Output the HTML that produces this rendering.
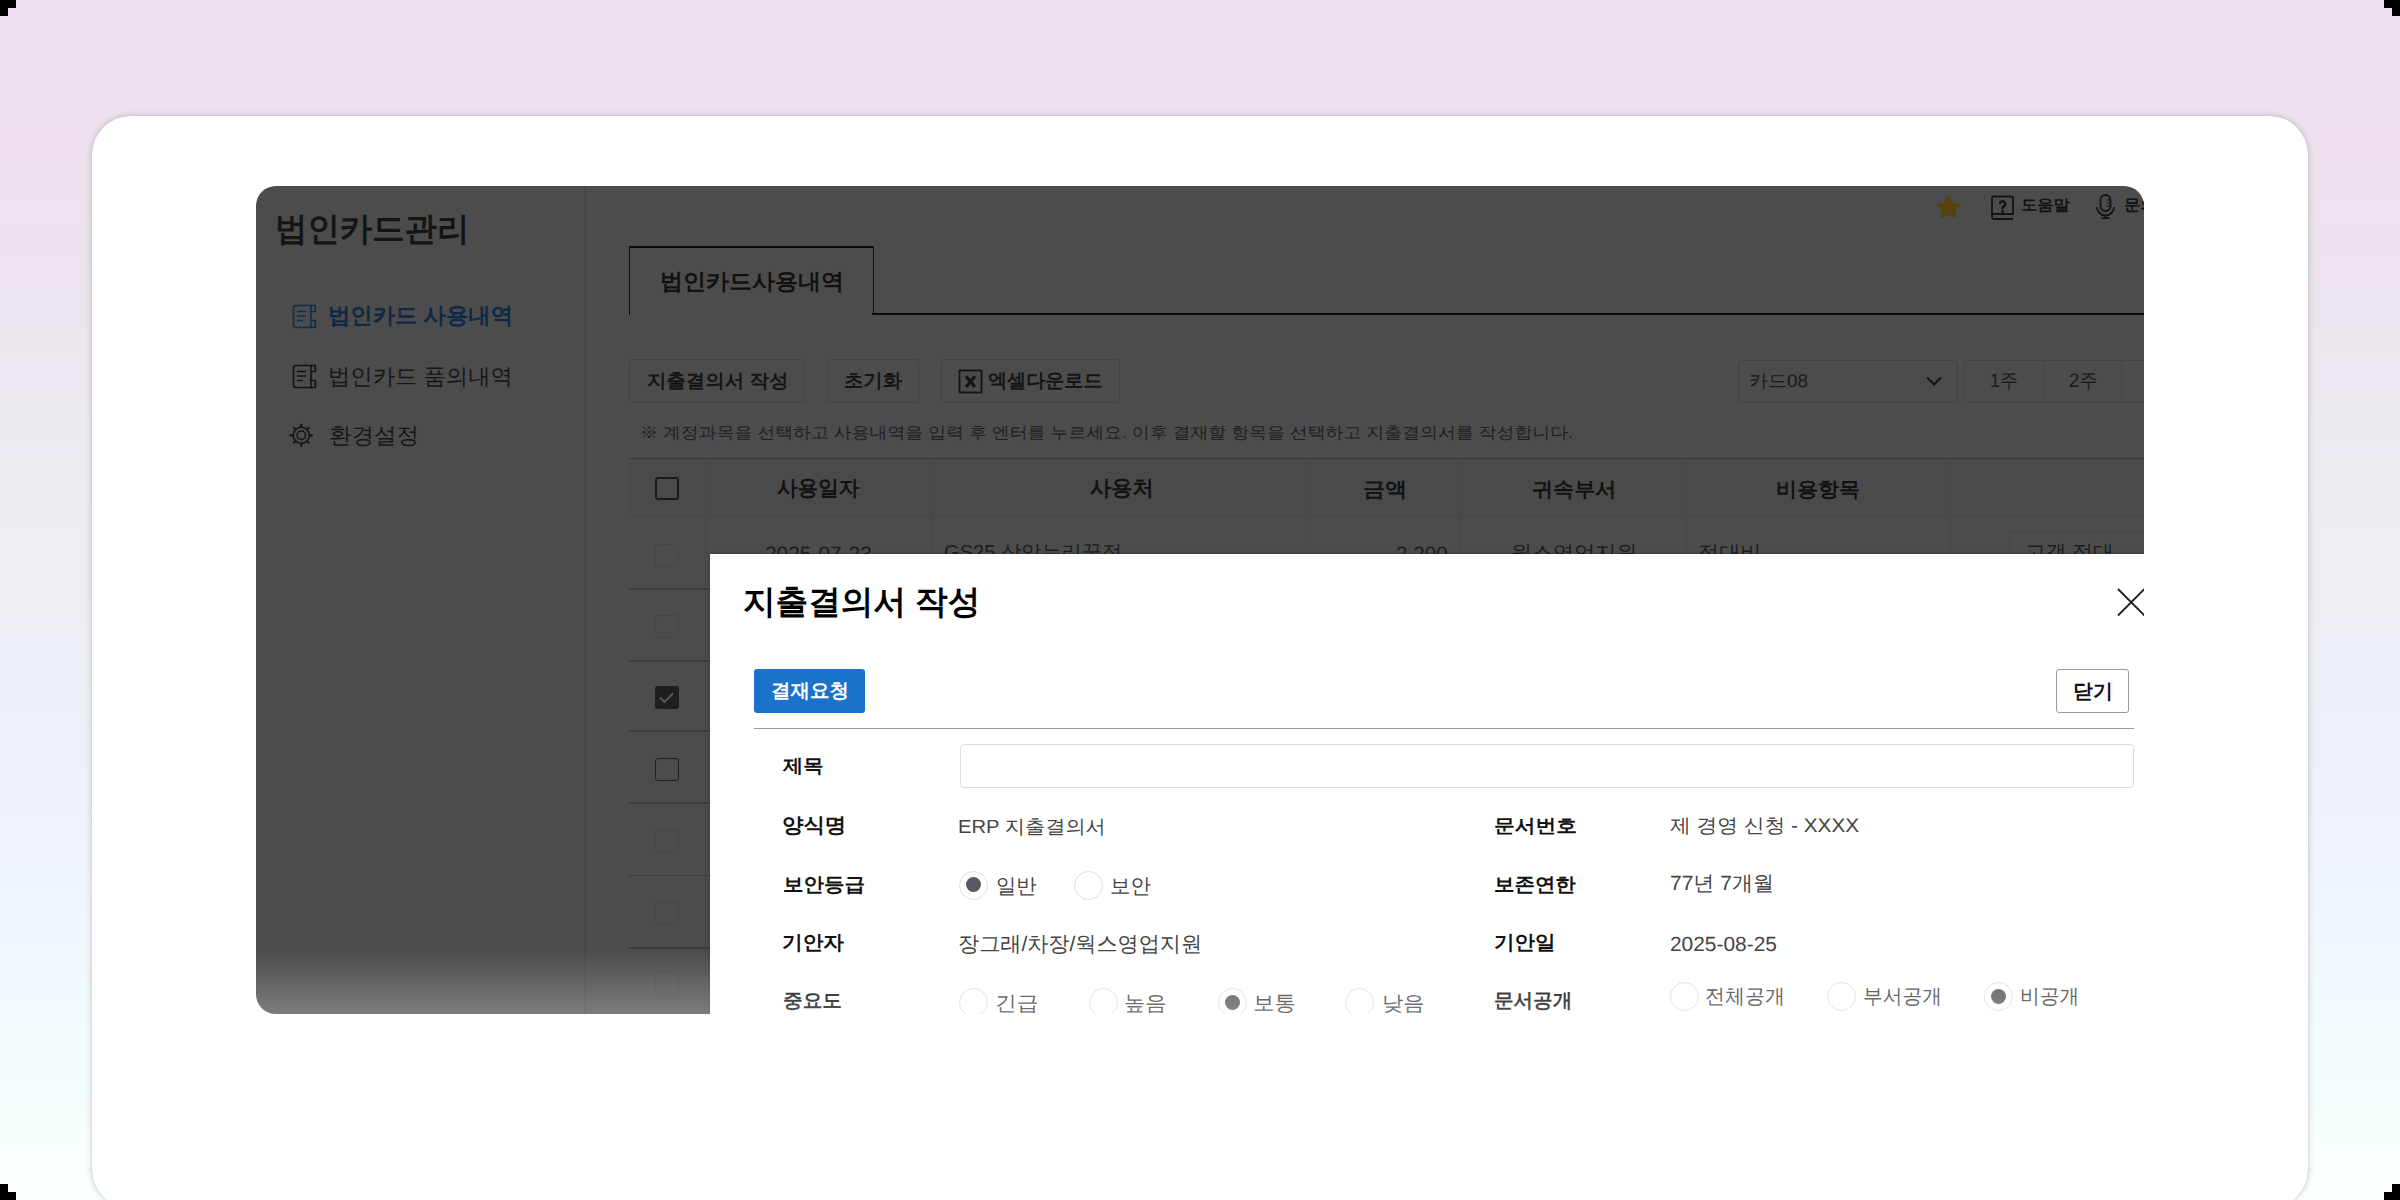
<!DOCTYPE html>
<html><head><meta charset="utf-8">
<style>
html,body{margin:0;padding:0}
body{width:2400px;height:1200px;overflow:hidden;position:relative;font-family:"Liberation Sans",sans-serif;
background:linear-gradient(180deg,#ede1ee 0px,#eee1ed 150px,#ece4ee 300px,#ecebf2 470px,#edeef4 600px,#edf0f8 750px,#eef3fc 850px,#f1fafe 1000px,#f5fefd 1100px,#fafffe 1200px)}
.abs{position:absolute}
.t{position:absolute;white-space:nowrap;line-height:1;transform-origin:0 0;text-rendering:geometricPrecision}
.k{position:absolute;background:#000}
#card{position:absolute;left:92px;top:116px;width:2216px;height:1092px;background:#fff;border-radius:38px;
box-shadow:0 0 1px rgba(60,60,80,.35),0 0 6px rgba(50,50,80,.24)}
#app{position:absolute;left:256px;top:186px;width:1888px;height:827.5px;overflow:hidden;border-radius:20px 20px 0 20px;background:#4c4c4c}
#in{position:absolute;left:-256px;top:-186px;width:2400px;height:1200px}
.ln{position:absolute}
.btn{position:absolute;box-sizing:border-box;border:1.5px solid #424242;border-radius:2.5px}
.cb{position:absolute;box-sizing:border-box;width:24px;height:23px;border-radius:3px}
.radio{position:absolute;box-sizing:border-box;width:29px;height:29px;border-radius:50%;border:1.8px solid #dedede;background:#fff}
.radio.on::after{content:"";position:absolute;left:5.5px;top:5.5px;width:15px;height:15px;border-radius:50%;background:#58585e}
</style></head><body>
<!-- corner marks -->
<div class="k" style="left:0;top:0;width:16px;height:8px"></div><div class="k" style="left:0;top:8px;width:8px;height:8px"></div>
<div class="k" style="left:2384px;top:0;width:16px;height:8px"></div><div class="k" style="left:2392px;top:8px;width:8px;height:8px"></div>
<div class="k" style="left:0;top:1184px;width:8px;height:16px"></div><div class="k" style="left:8px;top:1192px;width:8px;height:8px"></div>
<div class="k" style="left:2392px;top:1184px;width:8px;height:16px"></div><div class="k" style="left:2384px;top:1192px;width:8px;height:8px"></div>

<div id="card"></div>

<div id="app"><div id="in">
  <!-- sidebar divider -->
  <div class="ln" style="left:584px;top:186px;width:1.5px;height:827px;background:#454545"></div>
  <!-- sidebar icons -->
  <svg class="abs" style="left:285px;top:298px" width="36" height="36" viewBox="0 0 36 36">
    <g fill="none" stroke="#0d2e52" stroke-width="1.6">
      <path d="M26 7.5H11a2.5 2.5 0 0 0-2.5 2.5V27a2.5 2.5 0 0 0 2.5 2.5H26z"/>
      <path d="M26 7.5h4.3v6H26M26 22.5h4.3v7H26"/>
    </g>
    <g stroke="#0d2e52" stroke-width="1.5">
      <path d="M12 13.5h9M12 18h9M12 22.5h6"/>
    </g>
  </svg>
  <svg class="abs" style="left:285px;top:358px" width="36" height="36" viewBox="0 0 36 36">
    <g fill="none" stroke="#141414" stroke-width="1.6">
      <path d="M26 7.5H11a2.5 2.5 0 0 0-2.5 2.5V27a2.5 2.5 0 0 0 2.5 2.5H26z"/>
      <path d="M26 7.5h4.3v6H26M26 22.5h4.3v7H26"/>
    </g>
    <g stroke="#141414" stroke-width="1.5">
      <path d="M12 13.5h9M12 18h9M12 22.5h6"/>
    </g>
  </svg>
  <svg class="abs" style="left:285px;top:419px" width="33" height="33" viewBox="0 0 33 33">
    <g fill="none" stroke="#141414">
      <circle cx="16.3" cy="16.3" r="8" stroke-width="1.6"/>
      <circle cx="16.3" cy="16.3" r="4.2" stroke-width="1.5"/>
    </g>
    <g stroke="#141414" stroke-width="2.2">
      <path d="M16.3 4.8v3.5M16.3 24.3v3.5M4.8 16.3h3.5M24.3 16.3h3.5"/>
    </g>
    <g stroke="#141414" stroke-width="1.8">
      <path d="M8.2 8.2l2 2M22.4 22.4l2 2M8.2 24.4l2-2M22.4 10.2l2-2"/>
    </g>
  </svg>
  <!-- top right icons -->
  <svg class="abs" style="left:1935px;top:194px" width="27" height="26" viewBox="0 0 27 26">
    <path d="M13.5 2.5l3.6 6.9 7.6 1.1-5.5 5.3 1.4 7.6-7.1-3.7-7.1 3.7 1.4-7.6-5.5-5.3 7.6-1.1z" fill="#57400a" stroke="#57400a" stroke-width="1.6" stroke-linejoin="round"/>
  </svg>
  <svg class="abs" style="left:1990px;top:195px" width="26" height="27" viewBox="0 0 26 27">
    <g fill="none" stroke="#141414" stroke-width="1.8">
      <path d="M2 3a1.5 1.5 0 0 1 1.5-1.5h18A1.5 1.5 0 0 1 23 3v16H2z"/>
      <path d="M2 19v3.5a1.5 1.5 0 0 0 1.5 1.5H23"/>
      <path d="M9.8 9a2.7 2.7 0 1 1 4 2.4c-.9.5-1.3 1-1.3 2v.8" stroke-width="2.4"/>
    </g>
    <circle cx="12.5" cy="16.5" r="1.4" fill="#141414"/>
  </svg>
  <svg class="abs" style="left:2094px;top:193px" width="24" height="28" viewBox="0 0 24 28">
    <g fill="none" stroke="#141414" stroke-width="1.8">
      <rect x="6.5" y="2" width="10" height="16" rx="5"/>
      <path d="M3 14a8.5 8.5 0 0 0 17 0M11.5 22.5V25M7.5 25.2h8"/>
      <path d="M12.5 7h4M12.5 10h4M12.5 13h4" stroke-width="1.2"/>
    </g>
  </svg>
  <!-- tab -->
  <div class="ln" style="left:628.5px;top:245.5px;width:245.5px;height:69.5px;box-sizing:border-box;border:1.6px solid #0c0c0c;border-top-width:2px;border-bottom:none"></div>
  <div class="ln" style="left:872px;top:313.4px;width:1300px;height:1.7px;background:#0c0c0c"></div>
  <!-- buttons -->
  <div class="btn" style="left:628.8px;top:359.2px;width:176px;height:43.5px"></div>
  <div class="btn" style="left:826.8px;top:359.2px;width:92.5px;height:43.5px"></div>
  <div class="btn" style="left:941.3px;top:359.2px;width:178.5px;height:43.5px"></div>
  <svg class="abs" style="left:958px;top:368.5px" width="26" height="25" viewBox="0 0 26 25">
    <rect x="1.5" y="1.5" width="22" height="22" fill="none" stroke="#141414" stroke-width="1.8"/>
    <path d="M8 7.2l9 10.8M17 7.2l-9 10.8" stroke="#141414" stroke-width="3.2"/>
  </svg>
  <!-- select -->
  <div class="btn" style="left:1738px;top:359.5px;width:219.5px;height:43px"></div>
  <svg class="abs" style="left:1925px;top:375px" width="18" height="13" viewBox="0 0 18 13">
    <path d="M2 2.5l7 7 7-7" fill="none" stroke="#161616" stroke-width="2.2"/>
  </svg>
  <div class="btn" style="left:1964px;top:359.5px;width:240px;height:43px"></div>
  <div class="ln" style="left:2042.5px;top:360px;width:1.2px;height:42px;background:#444"></div>
  <div class="ln" style="left:2120.5px;top:360px;width:1.2px;height:42px;background:#444"></div>
  <!-- table -->
  <div class="ln" style="left:629px;top:458px;width:1520px;height:458px;background:#4a4a4a"></div>
  <div class="ln" style="left:629px;top:457.5px;width:1520px;height:1.8px;background:#3a3a3a"></div>
  <div class="ln" style="left:629px;top:516px;width:1520px;height:1.2px;background:#464646"></div>
  <div class="ln" style="left:629px;top:517px;width:1520px;height:500px;background:#4c4c4c"></div>
  <div class="ln" style="left:704.5px;top:459px;width:1.2px;height:560px;background:#464646"></div>
  <div class="ln" style="left:931.5px;top:459px;width:1.2px;height:100px;background:#464646"></div>
  <div class="ln" style="left:1308.5px;top:459px;width:1.2px;height:100px;background:#464646"></div>
  <div class="ln" style="left:1460px;top:459px;width:1.2px;height:100px;background:#464646"></div>
  <div class="ln" style="left:1686.3px;top:459px;width:1.2px;height:100px;background:#464646"></div>
  <div class="ln" style="left:1950.2px;top:459px;width:1.2px;height:100px;background:#464646"></div>
  <div class="ln" style="left:629px;top:588.3px;width:1520px;height:1.5px;background:#3c3c3c"></div>
  <div class="ln" style="left:629px;top:660.3px;width:1520px;height:1.5px;background:#3c3c3c"></div>
  <div class="ln" style="left:629px;top:730.4px;width:1520px;height:1.5px;background:#3c3c3c"></div>
  <div class="ln" style="left:629px;top:802.3px;width:1520px;height:1.5px;background:#3c3c3c"></div>
  <div class="ln" style="left:629px;top:874.7px;width:1520px;height:1.5px;background:#3c3c3c"></div>
  <div class="ln" style="left:629px;top:947.3px;width:1520px;height:1.5px;background:#3c3c3c"></div>
  <!-- checkboxes -->
  <div class="cb" style="left:655px;top:476.5px;border:2px solid #1a1a1a"></div>
  <div class="cb" style="left:655px;top:543.5px;border:1.5px solid #454545"></div>
  <div class="cb" style="left:655px;top:615px;border:1.5px solid #454545"></div>
  <div class="cb" style="left:655px;top:685.5px;background:#1e1e1e"></div>
  <svg class="abs" style="left:655px;top:685.5px" width="24" height="23" viewBox="0 0 24 23"><path d="M5 11.5l4.5 4.5 8.5-8.5" fill="none" stroke="#5a5a5a" stroke-width="1.8"/></svg>
  <div class="cb" style="left:655px;top:757.5px;border:1.7px solid #1e1e1e"></div>
  <div class="cb" style="left:655px;top:829.5px;border:1.5px solid #454545"></div>
  <div class="cb" style="left:655px;top:902px;border:1.5px solid #454545"></div>
  <div class="cb" style="left:655px;top:972px;border:1.5px solid #454545"></div>
  <!-- input in row1 -->
  <div class="btn" style="left:2009px;top:531px;width:200px;height:43px;border-color:#444"></div>
<div class="t" id="sb_title" style="left:275.08px;top:211.99px;font-size:32.98px;font-weight:bold;color:#141414;transform:scaleX(0.9827)">법인카드관리</div>
<div class="t" id="sb_m1" style="left:327.99px;top:305.14px;font-size:22.34px;font-weight:bold;color:#0e2846;transform:scaleX(1.0009)">법인카드 사용내역</div>
<div class="t" id="sb_m2" style="left:328.27px;top:365.70px;font-size:22.22px;font-weight:normal;color:#161616;transform:scaleX(1.0049)">법인카드 품의내역</div>
<div class="t" id="sb_m3" style="left:329.41px;top:424.68px;font-size:22.47px;font-weight:normal;color:#161616;transform:scaleX(1.0007)">환경설정</div>
<div class="t" id="tr_help" style="left:2021.03px;top:198.33px;font-size:15.32px;font-weight:bold;color:#121212;transform:scaleX(1.0583)">도움말</div>
<div class="t" id="tr_ask" style="left:2123.73px;top:198.32px;font-size:15.48px;font-weight:bold;color:#121212;transform:scaleX(1.0455)">문의</div>
<div class="t" id="tab" style="left:660.23px;top:270.52px;font-size:22.34px;font-weight:bold;color:#111;transform:scaleX(1.0293)">법인카드사용내역</div>
<div class="t" id="b1" style="left:646.90px;top:372.09px;font-size:18.85px;font-weight:bold;color:#151515;transform:scaleX(1.0305)">지출결의서 작성</div>
<div class="t" id="b2" style="left:843.97px;top:372.37px;font-size:19.46px;font-weight:bold;color:#151515;transform:scaleX(0.9958)">초기화</div>
<div class="t" id="b3" style="left:987.80px;top:372.39px;font-size:19.26px;font-weight:bold;color:#151515;transform:scaleX(0.9914)">엑셀다운로드</div>
<div class="t" id="sel" style="left:1748.91px;top:372.37px;font-size:18.31px;font-weight:normal;color:#1a1a1a;transform:scaleX(1.0359)">카드08</div>
<div class="t" id="w1" style="left:1989.68px;top:372.00px;font-size:19.40px;font-weight:normal;color:#1a1a1a;transform:scaleX(0.9200)">1주</div>
<div class="t" id="w2" style="left:2068.61px;top:371.65px;font-size:19.40px;font-weight:normal;color:#1a1a1a;transform:scaleX(0.9532)">2주</div>
<div class="t" id="note" style="left:640.39px;top:425.21px;font-size:16.30px;font-weight:normal;color:#202020;transform:scaleX(1.0985)">※ 계정과목을 선택하고 사용내역을 입력 후 엔터를 누르세요. 이후 결재할 항목을 선택하고 지출결의서를 작성합니다.</div>
<div class="t" id="h1" style="left:776.70px;top:477.92px;font-size:21.29px;font-weight:bold;color:#121212;transform:scaleX(0.9676)">사용일자</div>
<div class="t" id="h2" style="left:1089.50px;top:477.92px;font-size:21.29px;font-weight:bold;color:#121212;transform:scaleX(0.9980)">사용처</div>
<div class="t" id="h3" style="left:1362.66px;top:479.64px;font-size:20.21px;font-weight:bold;color:#121212;transform:scaleX(1.0930)">금액</div>
<div class="t" id="h4" style="left:1531.95px;top:479.64px;font-size:20.21px;font-weight:bold;color:#121212;transform:scaleX(1.0435)">귀속부서</div>
<div class="t" id="h5" style="left:1775.92px;top:479.64px;font-size:20.21px;font-weight:bold;color:#121212;transform:scaleX(1.0398)">비용항목</div>
<div class="t" id="r1" style="left:765.19px;top:544.63px;font-size:20.86px;font-weight:normal;color:#1c1c1c;transform:scaleX(1.0008)">2025-07-23</div>
<div class="t" id="r2" style="left:944.37px;top:542.88px;font-size:20.19px;font-weight:normal;color:#1c1c1c;transform:scaleX(0.9982)">GS25 상암누리꿈점</div>
<div class="t" id="r3" style="left:1395.97px;top:544.66px;font-size:20.66px;font-weight:normal;color:#1c1c1c;transform:scaleX(1.0000)">2,200</div>
<div class="t" id="r4" style="left:1510.61px;top:543.52px;font-size:20.88px;font-weight:normal;color:#1c1c1c;transform:scaleX(1.0087)">웍스영업지원</div>
<div class="t" id="r5" style="left:1697.69px;top:542.81px;font-size:21.04px;font-weight:normal;color:#1c1c1c;transform:scaleX(1.0069)">접대비</div>
<div class="t" id="r6" style="left:2025.24px;top:542.86px;font-size:20.39px;font-weight:normal;color:#1c1c1c;transform:scaleX(1.0197)">고객 접대</div>

  <!-- modal -->
  <div class="abs" style="left:709.8px;top:554.2px;width:1500px;height:600px;background:#fff;box-shadow:0 0 3px rgba(0,0,0,.28)"></div>
  <svg class="abs" style="left:2116px;top:587px" width="30" height="30" viewBox="0 0 30 30">
    <path d="M2 2l26.5 26.5M28.5 2L2 28.5" stroke="#222" stroke-width="1.9"/>
  </svg>
  <div class="abs" style="left:754px;top:669px;width:111px;height:44px;background:#1b73c9;border-radius:3px"></div>
  <div class="abs" style="left:2056px;top:669px;width:73px;height:44px;box-sizing:border-box;border:1.5px solid #9a9a9a;border-radius:3px;background:#fff"></div>
  <div class="abs" style="left:754px;top:727.8px;width:1380px;height:1.6px;background:#999"></div>
  <div class="abs" style="left:959.5px;top:744px;width:1174px;height:44px;box-sizing:border-box;border:1.5px solid #dedede;border-radius:4px"></div>
  <div class="radio on" style="left:959px;top:870.5px"></div>
  <div class="radio" style="left:1074px;top:870.5px"></div>
  <div class="radio" style="left:959px;top:988px"></div>
  <div class="radio" style="left:1088.5px;top:988px"></div>
  <div class="radio on" style="left:1218px;top:988px"></div>
  <div class="radio" style="left:1345px;top:988px"></div>
  <div class="radio" style="left:1670px;top:982px"></div>
  <div class="radio" style="left:1827px;top:982px"></div>
  <div class="radio on" style="left:1984px;top:982px"></div>
<div class="t" id="m_title" style="left:742.91px;top:586.03px;font-size:33.33px;font-weight:bold;color:#000;transform:scaleX(0.9785)">지출결의서 작성</div>
<div class="t" id="m_req" style="left:770.69px;top:682.05px;font-size:19.35px;font-weight:bold;color:#fff;transform:scaleX(1.0061)">결재요청</div>
<div class="t" id="m_close" style="left:2072.83px;top:681.62px;font-size:20.22px;font-weight:bold;color:#111;transform:scaleX(0.9868)">닫기</div>
<div class="t" id="l1" style="left:783.36px;top:757.32px;font-size:18.72px;font-weight:bold;color:#111;transform:scaleX(1.0790)">제목</div>
<div class="t" id="l2" style="left:781.82px;top:816.06px;font-size:20.43px;font-weight:bold;color:#111;transform:scaleX(1.0491)">양식명</div>
<div class="t" id="v2" style="left:957.76px;top:817.95px;font-size:19.01px;font-weight:normal;color:#444;transform:scaleX(1.0633)">ERP 지출결의서</div>
<div class="t" id="l3" style="left:1493.51px;top:816.65px;font-size:18.71px;font-weight:bold;color:#111;transform:scaleX(1.1081)">문서번호</div>
<div class="t" id="v3" style="left:1669.67px;top:817.25px;font-size:19.55px;font-weight:normal;color:#444;transform:scaleX(1.0628)">제 경영 신청 - XXXX</div>
<div class="t" id="l4" style="left:782.78px;top:876.02px;font-size:19.36px;font-weight:bold;color:#111;transform:scaleX(1.0589)">보안등급</div>
<div class="t" id="v4a" style="left:995.81px;top:875.54px;font-size:21.03px;font-weight:normal;color:#444;transform:scaleX(0.9678)">일반</div>
<div class="t" id="v4b" style="left:1109.78px;top:875.54px;font-size:21.03px;font-weight:normal;color:#444;transform:scaleX(0.9720)">보안</div>
<div class="t" id="l5" style="left:1493.52px;top:875.53px;font-size:19.23px;font-weight:bold;color:#111;transform:scaleX(1.0644)">보존연한</div>
<div class="t" id="v5" style="left:1669.83px;top:874.08px;font-size:20.56px;font-weight:normal;color:#444;transform:scaleX(1.0222)">77년 7개월</div>
<div class="t" id="l6" style="left:782.49px;top:934.16px;font-size:19.57px;font-weight:bold;color:#111;transform:scaleX(1.0566)">기안자</div>
<div class="t" id="v6" style="left:957.96px;top:933.52px;font-size:21.22px;font-weight:normal;color:#444;transform:scaleX(0.9956)">장그래/차장/웍스영업지원</div>
<div class="t" id="l7" style="left:1493.93px;top:933.82px;font-size:19.78px;font-weight:bold;color:#111;transform:scaleX(1.0365)">기안일</div>
<div class="t" id="v7" style="left:1669.72px;top:934.91px;font-size:20.56px;font-weight:normal;color:#444;transform:scaleX(1.0173)">2025-08-25</div>
<div class="t" id="l8" style="left:782.84px;top:991.65px;font-size:19.33px;font-weight:bold;color:#111;transform:scaleX(1.0156)">중요도</div>
<div class="t" id="v8a" style="left:994.51px;top:994.49px;font-size:20.33px;font-weight:normal;color:#444;transform:scaleX(1.0657)">긴급</div>
<div class="t" id="v8b" style="left:1124.24px;top:994.26px;font-size:20.56px;font-weight:normal;color:#444;transform:scaleX(1.0296)">높음</div>
<div class="t" id="v8c" style="left:1252.63px;top:994.03px;font-size:20.80px;font-weight:normal;color:#444;transform:scaleX(1.0295)">보통</div>
<div class="t" id="v8d" style="left:1381.53px;top:994.49px;font-size:20.33px;font-weight:normal;color:#444;transform:scaleX(1.0454)">낮음</div>
<div class="t" id="l9" style="left:1493.50px;top:992.49px;font-size:19.68px;font-weight:bold;color:#111;transform:scaleX(0.9943)">문서공개</div>
<div class="t" id="v9a" style="left:1705.43px;top:987.33px;font-size:20.33px;font-weight:normal;color:#444;transform:scaleX(0.9828)">전체공개</div>
<div class="t" id="v9b" style="left:1863.01px;top:987.33px;font-size:20.33px;font-weight:normal;color:#444;transform:scaleX(0.9702)">부서공개</div>
<div class="t" id="v9c" style="left:2020.06px;top:987.33px;font-size:20.33px;font-weight:normal;color:#444;transform:scaleX(0.9732)">비공개</div>
  <!-- bottom fade -->
  <div class="abs" style="left:0;top:950px;width:2400px;height:64px;background:linear-gradient(180deg,rgba(255,255,255,0),rgba(255,255,255,.27))"></div>
</div></div>
</body></html>
